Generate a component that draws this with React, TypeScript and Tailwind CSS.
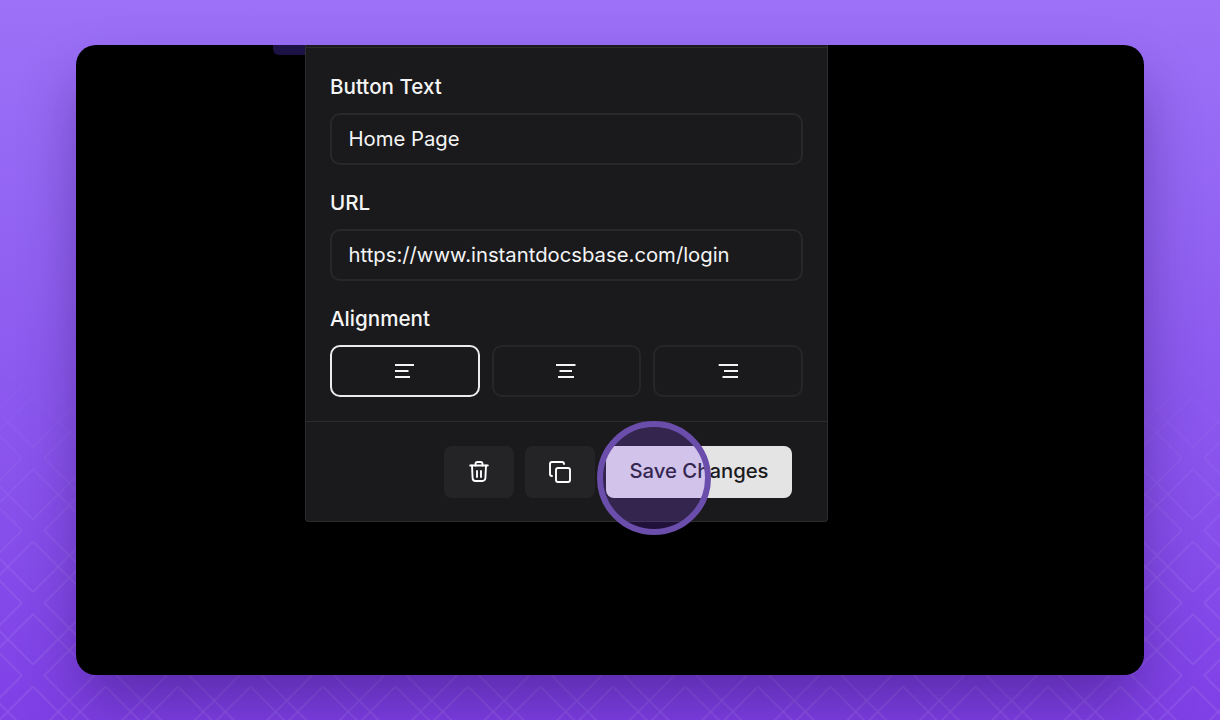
import { Copy } from "lucide-react";

const AlignIcon = ({ lines }: { lines: [number, number][] }) => {
  return (
    <svg width="22" height="18" viewBox="0 0 22 18" fill="none" className="text-white">
      {lines.map(([from, to], i) => (
        <line
          key={i}
          x1={from}
          x2={to}
          y1={3 + i * 6}
          y2={3 + i * 6}
          stroke="currentColor"
          strokeWidth="1.9"
        />
      ))}
    </svg>
  );
};

const TrashIcon = () => {
  return (
    <svg width="24" height="24" viewBox="0 0 24 24" fill="none" stroke="currentColor" strokeWidth="1.9" strokeLinecap="round" strokeLinejoin="round">
      <path d="M3.2 5.5h17.6" />
      <path d="M8.5 5.5V4a2 2 0 0 1 2-2h3a2 2 0 0 1 2 2v1.5" />
      <path d="M5 5.5l.6 12.5a3 3 0 0 0 3 3h6.8a3 3 0 0 0 3-3L19 5.5" />
      <path d="M10 11v6" />
      <path d="M14 11v6" />
    </svg>
  );
};

const Field = ({ label, value }: { label: string; value: string }) => {
  return (
    <div className="flex flex-col gap-[12px]">
      <label className="text-[20.6px] leading-[28px] font-medium text-[#f5f5f5]">{label}</label>
      <div className="h-[52px] flex items-center pl-[16.5px] pr-[17px] rounded-[10px] border-2 border-[#28282b] text-[20.3px] text-[#f4f4f5]">
        {value}
      </div>
    </div>
  );
};

const Background = () => {
  return (
    <svg className="absolute inset-0" width="1220" height="720">
      <defs>
        <pattern
          id="diamonds"
          width="72"
          height="72"
          patternUnits="userSpaceOnUse"
          patternTransform="translate(33 23) scale(1.00694)"
        >
          <path
            d="M11 0L72 61 M0 11L61 72 M61 0L0 61 M72 11L11 72"
            fill="none"
            stroke="#ffffff"
            strokeWidth="1.5"
          />
        </pattern>
        <linearGradient id="fade" x1="0" y1="0" x2="0" y2="1">
          <stop offset="0.45" stopColor="#ffffff" stopOpacity="0" />
          <stop offset="0.8" stopColor="#ffffff" stopOpacity="0.09" />
          <stop offset="1" stopColor="#ffffff" stopOpacity="0.11" />
        </linearGradient>
        <mask id="fadeMask">
          <rect width="1220" height="720" fill="url(#fade)" />
        </mask>
      </defs>
      <rect width="1220" height="720" fill="url(#diamonds)" mask="url(#fadeMask)" />
    </svg>
  );
};

export default function App() {
  return (
    <div className="relative w-[1220px] h-[720px] overflow-hidden bg-gradient-to-b from-[#9c72f8] to-[#7f40e6] px-[76px] pt-[45px] pb-[45px] font-['Inter',sans-serif]">
      <Background />
      <div className="relative h-full rounded-[20px] bg-black shadow-[0_30px_60px_-6px_rgba(40,10,90,0.45)] overflow-hidden pl-[229px]">
        <div className="absolute left-[197px] top-0 w-[40px] h-[10px] rounded-bl-[6px] bg-[#1c1245]" />
        <div className="relative w-[523px] h-[477px] pt-[2px] rounded-b-[4px] border-x border-b border-[#2c2c2e] bg-[#1a1a1c] flex flex-col">
          <div className="flex flex-col gap-[24px] px-[24px] pt-[25px] pb-[24px] border-t border-[#2c2c2e]">
            <Field label="Button Text" value="Home Page" />
            <Field label="URL" value="https://www.instantdocsbase.com/login" />
            <div className="flex flex-col gap-[12px]">
              <label className="text-[20.6px] leading-[28px] font-medium text-[#f5f5f5]">Alignment</label>
              <div className="grid grid-cols-3 gap-[12px]">
                <button className="h-[52px] rounded-[10px] border-2 border-[#ebebeb] flex items-center justify-center">
                  <AlignIcon lines={[[1, 20], [1, 14.5], [1, 16]]} />
                </button>
                <button className="h-[52px] rounded-[10px] border-2 border-[#262629] flex items-center justify-center">
                  <AlignIcon lines={[[1, 20.5], [4.5, 17], [3, 19]]} />
                </button>
                <button className="h-[52px] rounded-[10px] border-2 border-[#262629] flex items-center justify-center">
                  <AlignIcon lines={[[1.7, 21], [7, 21], [5.5, 21]]} />
                </button>
              </div>
            </div>
          </div>
          <div className="flex-1 border-t border-[#2c2c2e] flex items-center justify-end pr-[35px] gap-[11px]">
            <button className="w-[70px] h-[52px] rounded-[8px] bg-[#242426] flex items-center justify-center text-white">
              <TrashIcon />
            </button>
            <button className="w-[70px] h-[52px] rounded-[8px] bg-[#242426] flex items-center justify-center text-white">
              <Copy size={24} strokeWidth={1.9} />
            </button>
            <button className="w-[186px] h-[52px] rounded-[8px] bg-[#e4e4e5] text-[20.3px] font-medium text-[#1a1a1c]">
              Save Changes
            </button>
          </div>
        </div>
      </div>
      {/* click marker */}
      <div className="absolute left-[597px] top-[421px] w-[114px] h-[114px] rounded-full border-[6px] border-[#6b4dab] bg-[rgba(139,76,255,0.22)]" />
    </div>
  );
}
